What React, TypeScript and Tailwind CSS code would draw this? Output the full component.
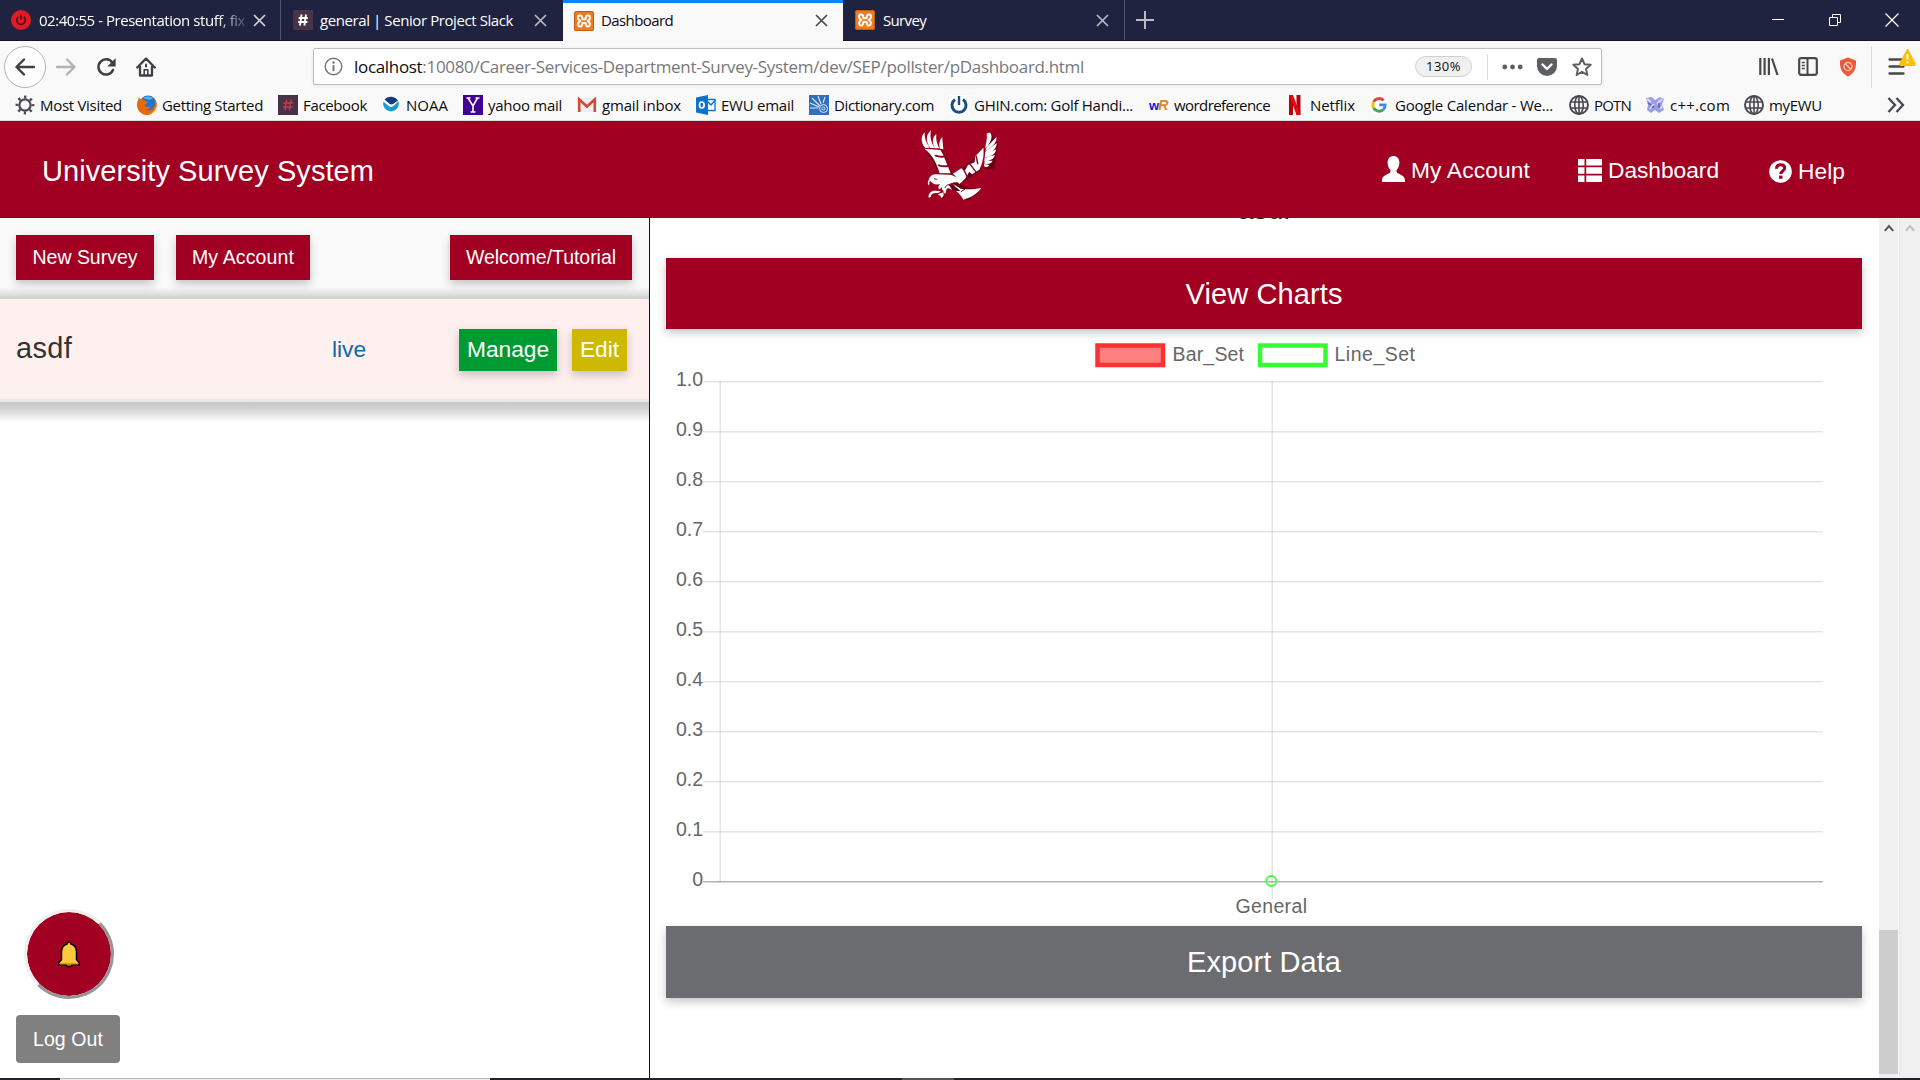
import React, { useLayoutEffect, useRef, useState } from "react";

const CHROME = "font-['Open_Sans',sans-serif]";

/* Single-line label whose tracking is adjusted to occupy a given width. */
function Label({ text, w, className = "" }: { text: React.ReactNode; w: number; className?: string }) {
  const ref = useRef<HTMLSpanElement>(null);
  const [ls, setLs] = useState(0);
  useLayoutEffect(() => {
    const el = ref.current;
    if (!el) return;
    const n = (el.textContent || "").length;
    setLs((w - el.getBoundingClientRect().width) / n);
  }, [w]);
  return (
    <span className={`block shrink-0 whitespace-nowrap ${className}`} style={{ width: w }}>
      <span ref={ref} className="inline-block" style={{ letterSpacing: ls }}>
        {text}
      </span>
    </span>
  );
}

function Xampp() {
  return (
    <svg className="size-5 shrink-0" viewBox="0 0 20 20">
      <rect width="20" height="20" rx="2.5" fill="#f07c1e" />
      <rect x="0.5" y="0.5" width="19" height="19" rx="2" fill="none" stroke="#c05a10" />
      <path
        d="M4.500 4.700Q8.800 3.600 8.300 8.300H11.700Q11.200 3.600 15.500 4.700Q17 8.300 13.800 10Q17 12 15.200 15.200Q11.700 16.700 11.700 12H8.300Q8.300 16.700 4.800 15.200Q3 12 6.200 10Q3 8.300 4.500 4.700Z"
        fill="none"
        stroke="#fff"
        strokeWidth="2"
        strokeLinejoin="round"
      />
    </svg>
  );
}

function SlackIcon({ color, bold }: { color: string; bold?: boolean }) {
  return (
    <svg className="size-5 shrink-0" viewBox="0 0 20 20">
      <rect width="20" height="20" fill="#4b3347" />
      <path d="M8.600 4.500 7 15.500M13 4.500l-1.600 11M5.600 8h9.200M5.200 12h9.200" stroke={color} strokeWidth={bold ? 1.9 : 1.3} fill="none" />
    </svg>
  );
}

function Close({ color }: { color: string }) {
  return (
    <svg className="size-[13px] shrink-0" viewBox="0 0 13 13">
      <path d="M1 1l11 11M12 1 1 12" stroke={color} strokeWidth="1.7" fill="none" />
    </svg>
  );
}

function TabBar() {
  return (
    <div className="flex h-[41px] shrink-0 border-b border-[#12132b] bg-[#202340] text-[15px] text-white">
      <div className="flex w-[281px] items-center border-r border-[#53566c] pl-[11px]">
        <svg className="size-5 shrink-0" viewBox="0 0 20 20">
          <circle cx="10" cy="10" r="10" fill="#e01b22" />
          <path d="M7.300 6.800a4.300 4.300 0 1 0 5.400 0M10 4.800v5" stroke="#4a0d1c" strokeWidth="1.500" fill="none" />
        </svg>
        <Label
          w={206}
          className="ml-2 [mask-image:linear-gradient(to_right,#000_86%,transparent_103%)]"
          text="02:40:55 - Presentation stuff, fix"
        />
        <span className="ml-2">
          <Close color="#d2d3d9" />
        </span>
      </div>
      <div className="flex w-[282px] items-center pl-3">
        <SlackIcon color="#fff" bold />
        <Label w={193} className="ml-[7px]" text="general | Senior Project Slack" />
        <span className="ml-[21px]">
          <Close color="#b9bac4" />
        </span>
      </div>
      <div className="-mb-px flex w-[280px] items-center border-t-[3px] border-[#0a84ff] bg-[#f9f9fa] pb-[3px] pl-[11px] text-[#0c0c0d]">
        <Xampp />
        <Label w={72} className="ml-[7px]" text="Dashboard" />
        <span className="ml-[142px]">
          <Close color="#4a4a4f" />
        </span>
      </div>
      <div className="flex w-[282px] items-center border-r border-[#53566c] pl-3">
        <Xampp />
        <Label w={43} className="ml-2" text="Survey" />
        <span className="ml-[170px]">
          <Close color="#b9bac4" />
        </span>
      </div>
      <svg className="mt-[11px] ml-[11px] size-[18px]" viewBox="0 0 18 18">
        <path d="M9 0v18M0 9h18" stroke="#b9bac4" strokeWidth="2" />
      </svg>
      <div className="ml-auto flex gap-[43px] pt-[13px] pr-[21px]">
        <svg className="size-[14px]" viewBox="0 0 14 14">
          <path d="M1 6.500h12" stroke="#fff" />
        </svg>
        <svg className="size-[14px]" viewBox="0 0 14 14" fill="none" stroke="#fff">
          <path d="M1.500 4.500h8v8h-8zM4.500 4.500v-3h8v8h-3" />
        </svg>
        <svg className="size-[14px]" viewBox="0 0 14 14">
          <path d="M.5.500l13 13M13.500.500l-13 13" stroke="#fff" strokeWidth="1.200" />
        </svg>
      </div>
    </div>
  );
}

function NavBar() {
  return (
    <div className="flex h-[51px] shrink-0 items-center bg-[#f9f9fa]">
      <div className="ml-1 flex size-[42px] shrink-0 items-center justify-center rounded-full border border-[#b5b5b8] bg-[#fdfdfd]">
        <svg className="size-5" viewBox="0 0 20 20" fill="none" stroke="#3f3f43" strokeWidth="2.400" strokeLinecap="round" strokeLinejoin="round">
          <path d="M19 10H1.500M9 2.500 1.500 10 9 17.500" />
        </svg>
      </div>
      <svg className="ml-[10px] size-5 shrink-0" viewBox="0 0 20 20" fill="none" stroke="#b3b3b6" strokeWidth="2.400" strokeLinecap="round" strokeLinejoin="round">
        <path d="M1 10h17.500M11 2.500l7.500 7.500-7.500 7.500" />
      </svg>
      <svg className="ml-[20px] size-5 shrink-0" viewBox="0 0 20 20">
        <path d="M16.300 5.600A7.600 7.600 0 1 0 17 13" stroke="#3f3f43" strokeWidth="2.500" fill="none" strokeLinecap="round" />
        <path d="M19.600 1.200v8.300h-8.300z" fill="#3f3f43" />
      </svg>
      <svg className="ml-[20px] size-5 shrink-0" viewBox="0 0 20 20" fill="none" stroke="#3f3f43" strokeWidth="2.300" strokeLinejoin="round" strokeLinecap="round">
        <path d="M1.200 10.500 10 1.500l8.800 9M4 9v9.500h12V9" />
        <path d="M8.200 18v-5.200h3.600V18" strokeWidth="1.600" />
        <path d="M10 7.500v2" strokeWidth="2" />
      </svg>
      <div className="ml-[157px] flex h-[37px] w-[1289px] shrink-0 items-center rounded-[2px] border border-[#bdbdbe] bg-white shadow-[0_1px_4px_rgba(0,0,0,0.07)]">
        <svg className="ml-[10px] size-[19px] shrink-0" viewBox="0 0 19 19">
          <circle cx="9.500" cy="9.500" r="8.300" stroke="#737373" strokeWidth="1.400" fill="none" />
          <path d="M9.500 8.200v6" stroke="#737373" strokeWidth="2" />
          <circle cx="9.500" cy="5.500" r="1.200" fill="#737373" />
        </svg>
        <Label
          w={730}
          className="ml-[11px] text-[17px] text-[#77777a]"
          text={
            <>
              <span className="text-[#0c0c0d]">localhost</span>:10080/Career-Services-Department-Survey-System/dev/SEP/pollster/pDashboard.html
            </>
          }
        />
        <div className="ml-[331px] flex h-[21px] w-[57px] items-center justify-center rounded-full border border-[#cfcfd1] bg-[#f0f0f1] text-[13px] text-[#0c0c0d]">
          <Label w={35} text="130%" />
        </div>
        <div className="ml-[15px] h-[26px] w-px bg-[#dcdcde]" />
        <svg className="ml-[14px] h-[6px] w-[21px]" viewBox="0 0 21 6" fill="#5f5f63">
          <circle cx="2.800" cy="3" r="2.400" />
          <circle cx="10.500" cy="3" r="2.400" />
          <circle cx="18.200" cy="3" r="2.400" />
        </svg>
        <svg className="ml-[14px] size-5" viewBox="0 0 20 20">
          <path d="M2 1h16a2 2 0 0 1 2 2v6a10 10 0 0 1-20 0V3a2 2 0 0 1 2-2z" fill="#5f5f63" />
          <path d="M5.500 7.500 10 12l4.500-4.500" stroke="#fff" strokeWidth="2.400" fill="none" strokeLinecap="round" strokeLinejoin="round" />
        </svg>
        <svg className="ml-[15px] size-5" viewBox="0 0 20 20">
          <path d="M10 1.500l2.500 5.700 6.200.6-4.700 4.100 1.400 6.100L10 14.800 4.600 18 6 11.900 1.300 7.800l6.200-.6z" stroke="#5f5f63" strokeWidth="2" fill="none" strokeLinejoin="round" />
        </svg>
      </div>
      <svg className="ml-[157px] h-[19px] w-5 shrink-0" viewBox="0 0 20 19" stroke="#48484c" strokeWidth="2.200" fill="none">
        <path d="M1.300 1v17M5.600 1v17M9.900 1v17M13 1.500l5.500 16.500" />
      </svg>
      <svg className="ml-[19px] h-[19px] w-5 shrink-0" viewBox="0 0 20 19" stroke="#48484c" fill="none">
        <rect x="1.200" y="1.200" width="17.600" height="16.600" rx="2" strokeWidth="2.200" />
        <path d="M9.500 1v17" strokeWidth="2" />
        <path d="M3.800 5.500h3M3.800 8.500h3M3.800 11.500h3" strokeWidth="1.300" />
      </svg>
      <svg className="ml-[21px] h-[20px] w-[18px] shrink-0" viewBox="0 0 18 20">
        <path d="M9 .5l8 3c.5 8-2 13-8 16C3 16.500.5 11.500 1 3.500z" fill="#ea5a3c" />
        <circle cx="9" cy="9.500" r="4" stroke="#f8c5b8" strokeWidth="1.300" fill="none" />
        <path d="M6.300 6.800l5.400 5.400" stroke="#f8c5b8" strokeWidth="1.300" />
      </svg>
      <div className="ml-[14px] h-[42px] w-px shrink-0 bg-[#dddddf]" />
      <svg className="-mt-[12px] ml-[16px] h-[34px] w-7 shrink-0" viewBox="0 0 28 34">
        <path d="M1.500 15.500h14M1.500 22.500h14M1.500 29.500h14" stroke="#48484c" strokeWidth="2.300" strokeLinecap="round" />
        <path d="M19.500 5 27.300 19.500a1.300 1.300 0 0 1-1.200 2H13a1.300 1.300 0 0 1-1.200-2z" fill="#ffbf00" stroke="#ffbf00" strokeLinejoin="round" />
        <path d="M19.500 10v5.500M19.500 17.300v2" stroke="#fff" strokeWidth="2" />
      </svg>
    </div>
  );
}

const Globe = () => (
  <svg className="size-5" viewBox="0 0 20 20" stroke="#48484c" fill="none" strokeWidth="1.600">
    <circle cx="10" cy="10" r="9" strokeWidth="1.900" />
    <ellipse cx="10" cy="10" rx="4.200" ry="9" />
    <path d="M10 1v18M1.500 7h17M1.500 13h17" />
  </svg>
);

const bookmarks: { icon: React.ReactNode; slot: string; label: string; w: number }[] = [
  {
    slot: "ml-[15px] w-[25px]",
    label: "Most Visited",
    w: 82,
    icon: (
      <svg className="size-5" viewBox="0 0 20 20" fill="none" stroke="#48484c">
        <circle cx="10" cy="10" r="5.600" strokeWidth="2.200" />
        <circle cx="10" cy="10" r="8" strokeWidth="2.800" strokeDasharray="2.300 3.983" strokeDashoffset="1.150" />
      </svg>
    ),
  },
  {
    slot: "ml-[15px] w-[25px]",
    label: "Getting Started",
    w: 101,
    icon: (
      <svg className="size-5" viewBox="0 0 20 20">
        <circle cx="11" cy="9" r="8.500" fill="#2473c4" />
        <path d="M6 3c3-2 7-2 10 0-2 1-3 2-4 2z" fill="#4db3ea" />
        <path d="M1.500 3.500C1 1.800 3 3 4 4.300 6 4 8 5 8 6l3 1c-1 2-3 2-3 3.500 1 2 4 2 6 .500-1 3-4 4-6 3 3 2.500 8 1.500 9.500-3.500 1-3 .500-5-.500-7C20 6 20.500 10 19 14c-2 4-6 6-9.500 6C4 19.500 0 15 0 10c0-2.500.800-4.500 1.500-6.500z" fill="#e66a0c" />
        <path d="M12 18.800c4-.800 6.500-4 7.300-8.300.500 4-2 8-7.300 8.300z" fill="#fbd33c" />
      </svg>
    ),
  },
  { slot: "ml-[15px] w-[25px]", label: "Facebook", w: 64, icon: <SlackIcon color="#d0384a" /> },
  {
    slot: "ml-[14px] w-[25px]",
    label: "NOAA",
    w: 42,
    icon: (
      <svg className="size-5" viewBox="0 0 20 20">
        <path d="M3.500 4.500A8.300 8.300 0 0 1 17 6l-6 5z" fill="#123a7c" />
        <path d="M2.500 6.500C5 9 8 11.500 10 12c3-1 5-3.500 7.500-5.500A7.800 7.800 0 1 1 2.500 6.500z" fill="#1c9ad6" />
        <path d="M3 5.500l4.500 5L10 12l2.500-1.500L17 5.500l-5 3.500-2 .500-2-.500z" fill="#fff" />
      </svg>
    ),
  },
  {
    slot: "ml-[15px] w-[25px]",
    label: "yahoo mail",
    w: 74,
    icon: (
      <svg className="size-5" viewBox="0 0 20 20">
        <rect width="20" height="20" fill="#410093" />
        <path d="M5 3l5 8 4.500-8M10 11v6M3.500 3h4M12.500 3h4M7.500 17h5" stroke="#fff" strokeWidth="1.600" fill="none" />
      </svg>
    ),
  },
  {
    slot: "ml-[15px] w-[25px]",
    label: "gmail inbox",
    w: 79,
    icon: (
      <svg className="size-5" viewBox="0 0 20 20">
        <rect x="1" y="3" width="18" height="14" fill="#eceff1" />
        <path d="M2.200 17V4.500l7.800 7 7.800-7V17" stroke="#d44638" strokeWidth="2.600" fill="none" />
      </svg>
    ),
  },
  {
    slot: "ml-[15px] w-[25px]",
    label: "EWU email",
    w: 73,
    icon: (
      <svg className="size-5" viewBox="0 0 20 20">
        <path d="M11 4.500h8v11h-8z" fill="#fff" stroke="#1072c6" strokeWidth="1.300" />
        <path d="M11 6l4 4 4.500-5" stroke="#1072c6" strokeWidth="1.500" fill="none" />
        <path d="M0 2.500 12 0v20L0 17.500z" fill="#1072c6" />
        <ellipse cx="5.800" cy="10" rx="2.300" ry="3" stroke="#fff" strokeWidth="1.700" fill="none" />
      </svg>
    ),
  },
  {
    slot: "ml-[15px] w-[25px]",
    label: "Dictionary.com",
    w: 100,
    icon: (
      <svg className="size-5" viewBox="0 0 20 20">
        <rect width="20" height="20" fill="#2f6fc0" />
        <path d="M1 8l9 4M3 3l8 8M9 1l3 8M16 2l-2 6M1 13h8" stroke="#dcebff" strokeWidth="1.100" />
        <circle cx="14.500" cy="13.500" r="4" stroke="#dcebff" fill="none" />
        <circle cx="14.500" cy="13.500" r="1.500" stroke="#dcebff" fill="none" />
      </svg>
    ),
  },
  {
    slot: "ml-[15px] w-[25px]",
    label: "GHIN.com: Golf Handi...",
    w: 159,
    icon: (
      <svg className="size-5" viewBox="0 0 20 20">
        <rect width="20" height="20" fill="#fff" />
        <path d="M6 4.500a7 7 0 1 0 8 0" stroke="#1d4f80" strokeWidth="3" fill="none" />
        <path d="M10 1v9" stroke="#1d4f80" strokeWidth="2.400" />
      </svg>
    ),
  },
  {
    slot: "ml-[16px] w-[25px]",
    label: "wordreference",
    w: 96,
    icon: (
      <span className="flex w-5 items-baseline font-['Liberation_Sans',sans-serif] font-bold text-[#1414cc]">
        <span className="text-[13px] leading-5">w</span>
        <span className="-ml-px text-[14px] leading-5 text-[#dd8a1e] italic">R</span>
      </span>
    ),
  },
  {
    slot: "ml-[15px] w-[25px]",
    label: "Netflix",
    w: 45,
    icon: (
      <svg className="size-5" viewBox="0 0 20 20">
        <path d="M4 0h4v20H4zM11.500 0h4v20h-4z" fill="#b1060f" />
        <path d="M4 0h4l7.500 20h-4z" fill="#e50914" />
      </svg>
    ),
  },
  {
    slot: "ml-[14px] w-[26px]",
    label: "Google Calendar - We...",
    w: 158,
    icon: (
      <svg className="size-5" viewBox="0 0 20 20" fill="none" strokeWidth="2.800">
        <circle cx="10" cy="10" r="10" fill="#fff" />
        <path d="M14.600 5.400A6.200 6.200 0 0 0 4.600 7" stroke="#ea4335" />
        <path d="M4.600 7a6.200 6.200 0 0 0 0 6" stroke="#fbbc05" />
        <path d="M4.600 13a6.200 6.200 0 0 0 9.600 1.600" stroke="#34a853" />
        <path d="M14.200 14.600a6.200 6.200 0 0 0 2-4.800H10.200" stroke="#4285f4" />
      </svg>
    ),
  },
  { slot: "ml-[16px] w-[25px]", label: "POTN", w: 37, icon: <Globe /> },
  {
    slot: "ml-[14px] w-[25px]",
    label: "c++.com",
    w: 60,
    icon: (
      <svg className="size-5" viewBox="0 0 20 20">
        <path d="M1 3l6-1 3 3 5-3 4 2-2 5 2 6-5 3-4-3-4 3-4-3 1-5z" fill="#9c9ce6" />
        <path d="M2 4l4 3M12 9l5-5M5 14l4-5M15 14l3-4" stroke="#dcdcfa" strokeWidth="1.800" />
        <path d="M7 13l2-2M14 8v5M3 8l3 2" stroke="#5c5cc0" strokeWidth="1.500" />
      </svg>
    ),
  },
  { slot: "ml-[14px] w-[25px]", label: "myEWU", w: 53, icon: <Globe /> },
];

function BookmarkBar() {
  return (
    <div className="flex h-[29px] shrink-0 items-center border-b border-[#dedee0] bg-[#f9f9fa] pb-[2px] text-[15px] text-[#0c0c0d]">
      {bookmarks.map((b) => (
        <div key={b.label} className="flex shrink-0 items-center">
          <span className={`block shrink-0 ${b.slot}`}>{b.icon}</span>
          <Label w={b.w} text={b.label} />
        </div>
      ))}
      <svg className="mr-[15px] ml-auto h-4 w-[18px] shrink-0" viewBox="0 0 18 16" fill="none" stroke="#48484c" strokeWidth="2.300">
        <path d="M1.500 1l6.500 7-6.500 7M9.500 1l6.500 7-6.500 7" />
      </svg>
    </div>
  );
}

function EagleLogo() {
  return (
    <svg className="h-20 w-[90px] shrink-0" viewBox="0 0 270 240">
      <g transform="translate(4 5)" fill="#4d0010" opacity="0.7">
        <path d="M30 72 78 74l32 70-36 4zM116 142l90-74-14 64-50 34zM44 156l30-6 50 18 64 28-34 26-36-30-50-10z" />
        <path d="M210 66l20-42 14 30-10 74-26-2z" />
      </g>
      <g fill="#fff">
        <path d="M31 69C18 56 16 34 29 22c-1 18 5 32 15 46zM46 69C32 52 32 28 48 16c-4 20 0 36 11 53zM60 70C50 54 52 36 64 27c-2 16 2 30 9 43zM75 71c-4-12-2-26 7-34 0 12 2 22 3 36z" />
        <path d="M28 71l48 4 9 15 22 55H74C66 118 54 90 28 71z" />
        <path d="M114 146l25-16 10 8 10-18 20-8 2-18 24-26c3 24-2 46-12 66l-22 14-8-8-13 22-18 16c-2-14-8-24-18-32z" />
        <path d="M215 27c3-5 10-5 13 0 4 10 0 22-8 32-3 5-6 8-9 12 0-14 7-28 4-44zM244 36c2 14-6 26-33 43 2-12 8-18 14-23zM245 54c0 16-10 27-35 36l1-10zM244 73c-2 13-13 22-35 25l1-8zM240 90c-4 12-14 18-32 18l1-9zM233 107c-4 8-12 12-25 9l1-8zM223 120c-3 6-9 8-16 4l1-7z" />
        <path d="M42 163c3-11 12-15 22-15l40 1c14 2 27 11 36 25-20-5-34-1-44 10l-8 14c-8-2-9-8-5-14l-8 9c-7-3-6-9 0-17-12 6-22 0-28-7l-5 1c2 4 2 8-1 11-4-5-3-10 1-18z" />
        <path d="M41 218c-2-13 7-21 20-21l16 1c-5 7-10 6-17 6-8 1-13 5-12 11zM69 210c4-6 11-8 16-6 3 6 0 11-7 15 0-6-3-8-9-9z" />
        <path d="M112 175c12 8 18 12 24 16 20 3 40 3 63-2-12 16-26 27-54 35-5-10-12-19-22-26l13 0c-8-8-18-13-24-23z" />
        <path d="M86 205c-2-16 4-26 13-26 6 3 9 9 12 16-6-3-9-6-13-5-4 1-5 8-6 15z" />
      </g>
      <g fill="none" stroke="#8a0a22" strokeLinecap="round">
        <path d="M62 92c14 6 24 2 34 2M72 121c12 6 24 2 34 1" strokeWidth="6" />
        <path d="M143 128l17 34M161 112l21 28M184 94l4 22" strokeWidth="4.500" />
        <path d="M58 161l7 2M90 188c4-9 14-13 30-8M150 192l-12 8" strokeWidth="3" />
      </g>
    </svg>
  );
}

function SiteHeader() {
  return (
    <header className="grid h-[97px] shrink-0 grid-cols-[1fr_90px_1fr] bg-[#a10022] text-white">
      <Label w={332} className="mt-[32px] ml-[42px] text-[29px] leading-[36px]" text="University Survey System" />
      <div className="mt-1">
        <EagleLogo />
      </div>
      <nav className="flex items-start pt-[34px] text-[22.750px] leading-[30px]">
        <svg className="mt-[1px] ml-[377px] h-[26px] w-[23px] shrink-0" viewBox="0 0 23 26" fill="#fff">
          <path d="M11.500 0C8 0 5.600 2.600 5.600 6.500c0 3.200 1.200 6 2.900 7.600 0 1.700-.1 2.500-1 3C5.500 18.500 0 20 0 24v2h23v-2c0-4-5.500-5.500-7.500-6.900-.9-.5-1-1.300-1-3 1.700-1.600 2.900-4.400 2.900-7.600C17.400 2.600 15 0 11.500 0z" />
        </svg>
        <Label w={119} className="ml-[6px]" text="My Account" />
        <svg className="mt-[4px] ml-[48px] h-[23px] w-6 shrink-0" viewBox="0 0 24 23" fill="#fff">
          <path d="M0 0h6.500v6.500H0zM8.200 0H24v6.500H8.200zM0 8.200h6.500v6.500H0zM8.200 8.200H24v6.500H8.200zM0 16.500h6.500V23H0zM8.200 16.500H24V23H8.200z" />
        </svg>
        <Label w={111} className="ml-[6px]" text="Dashboard" />
        <svg className="mt-[5px] ml-[50px] size-[23px] shrink-0" viewBox="0 0 23 23">
          <circle cx="11.500" cy="11.500" r="11.300" fill="#fff" />
          <path d="M7.500 8.700c0-2.500 1.700-4 4.200-4 2.300 0 4 1.300 4 3.300 0 3-3.900 3-3.900 6" stroke="#a10022" strokeWidth="3" fill="none" />
          <path d="M11.800 15.600v3.200" stroke="#a10022" strokeWidth="3.400" />
        </svg>
        <Label w={47} className="mt-px ml-[6px]" text="Help" />
      </nav>
    </header>
  );
}

const SHADOW = "shadow-[0_4px_9px_rgba(0,0,0,0.22)]";

function Sidebar() {
  return (
    <aside className="flex h-full w-[650px] shrink-0 flex-col border-r border-[#111] bg-white">
      <div className="flex h-[81px] shrink-0 bg-[#fafafa] pt-[17px] pl-4 text-[19.500px] text-white">
        <button className={`flex h-[45px] w-[138px] items-center justify-center bg-[#a10022] ${SHADOW}`}>
          <Label w={105} text="New Survey" />
        </button>
        <button className={`ml-[22px] flex h-[45px] w-[134px] items-center justify-center bg-[#a10022] ${SHADOW}`}>
          <Label w={102} text="My Account" />
        </button>
        <button className={`ml-[140px] flex h-[45px] w-[182px] items-center justify-center bg-[#a10022] ${SHADOW}`}>
          <Label w={150} text="Welcome/Tutorial" />
        </button>
      </div>
      <div className="-mt-3 h-3 shrink-0 bg-linear-to-b from-transparent to-black/18" />
      <div className="flex h-[103px] shrink-0 items-start border-b-[3px] border-[#e8e8e8] bg-[#fff0f0] pl-4">
        <Label w={56} className="mt-[29px] text-[29px] leading-[40px] text-[#333]" text="asdf" />
        <Label w={34} className="mt-[33px] ml-[260px] text-[22.750px] leading-[34px] text-[#0b6ba5]" text="live" />
        <button className={`mt-[30px] ml-[93px] flex h-[42px] w-[98px] shrink-0 items-center justify-center bg-[#009a33] pb-px text-[22.750px] text-white ${SHADOW}`}>
          <Label w={82} text="Manage" />
        </button>
        <button className={`mt-[30px] ml-[15px] flex h-[42px] w-[55px] shrink-0 items-center justify-center bg-[#cdb900] pb-px text-[22.750px] text-white ${SHADOW}`}>
          <Label w={39} text="Edit" />
        </button>
      </div>
      <div className="h-5 shrink-0 bg-linear-to-b from-[#c8c8c8] via-[#d3d3d3] via-35% to-white" />
      <div className="mt-auto mb-[15px] ml-4">
        <button className="mb-[16px] ml-[8px] flex size-[90px] items-center justify-center rounded-full border-[3px] border-[#efefef] border-r-[#969696] border-b-[#969696] bg-[#a10022] bg-clip-padding">
          <svg className="h-[27px] w-6" viewBox="0 0 24 27">
            <path d="M12 1.200c1.200 0 1.900.7 1.900 1.700 3.800 1 5.600 4 5.600 8v7.600l2.700 3.300v2h-7.300c-.4 1.400-1.400 2-2.900 2s-2.500-.6-2.900-2H1.800v-2l2.700-3.300v-7.600c0-4 1.800-7 5.600-8 0-1 .7-1.700 1.900-1.700z" fill="#ffc83d" stroke="#000" strokeWidth="1.500" />
            <path d="M3 22.700h18" stroke="#e8970c" strokeWidth="1.600" />
            <path d="M10.200 24.300h3.600" stroke="#8a5a14" strokeWidth="1.500" />
          </svg>
        </button>
        <button className="flex h-12 w-[104px] items-center justify-center rounded bg-[#808080] pt-[2px] text-[19.500px] text-white">
          <Label w={70} text="Log Out" />
        </button>
      </div>
    </aside>
  );
}

const ticks = ["1.0", "0.9", "0.8", "0.7", "0.6", "0.5", "0.4", "0.3", "0.2", "0.1", "0"];

function Chart() {
  return (
    <svg className="block h-[597px] w-[1196px] shrink-0 font-['Liberation_Sans',Arial,sans-serif]" viewBox="666 329 1196 597" fontSize="19.500" fill="#666">
      <rect x="1097.500" y="345.500" width="65.500" height="19.500" fill="#ff8080" stroke="#ff3030" strokeWidth="4.500" />
      <text x="1172.500" y="361" textLength="71.500">Bar_Set</text>
      <rect x="1260" y="345.500" width="65.500" height="19.500" fill="#fff" stroke="#33ff33" strokeWidth="4.500" />
      <text x="1334.500" y="361" textLength="80.500">Line_Set</text>
      {ticks.map((t, i) => (
        <g key={t}>
          <rect x="703" y={381 + i * 50} width="1120" height="1.500" fill={i === 10 ? "#b3b3b3" : "#e5e5e5"} />
          <text x="703" y={386 + i * 50} textAnchor="end">
            {t}
          </text>
        </g>
      ))}
      <rect x="719.500" y="381" width="1.500" height="501" fill="#000" opacity="0.100" />
      <rect x="1271.500" y="381" width="1.500" height="518" fill="#000" opacity="0.100" />
      <circle cx="1271.300" cy="881" r="5" fill="none" stroke="#44fb44" strokeWidth="1.800" />
      <text x="1235.500" y="913" textLength="71.500">General</text>
    </svg>
  );
}

function ScrollTrack({ thumb, color }: { thumb?: boolean; color: string }) {
  return (
    <div className="flex h-full shrink-0 flex-col items-center bg-[#f0f0f0]">
      <svg className="mt-[6px] h-[8px] w-[10px]" viewBox="0 0 10 8" fill="none" stroke={color} strokeWidth="2">
        <path d="M.8 6.800 5 2l4.200 4.800" />
      </svg>
      {thumb && <div className="mt-auto mb-1 h-[144px] w-[19px] bg-[#cdcdcd]" />}
    </div>
  );
}

function ChartPanel() {
  return (
    <main className="flex h-full w-[1229px] shrink-0 flex-col overflow-hidden bg-white pl-4">
      <div className="flex h-[40px] w-[1196px] shrink-0 justify-center">
        <div className="h-[2px] overflow-hidden">
          <Label w={53} className="-mt-[27px] text-[29px] leading-[36px] text-[#222]" text="asdf" />
        </div>
      </div>
      <button className={`relative flex h-[71px] w-[1196px] shrink-0 items-center justify-center bg-[#a10022] pt-[3px] text-[29px] text-white ${SHADOW}`}>
        <Label w={157} text="View Charts" />
      </button>
      <Chart />
      <button className={`flex h-[72px] w-[1196px] shrink-0 items-center justify-center bg-[#6b6c70] pt-[2px] text-[29px] text-white ${SHADOW}`}>
        <Label w={154} text="Export Data" />
      </button>
    </main>
  );
}

export default function App() {
  return (
    <div className="flex h-[1080px] w-[1920px] flex-col overflow-hidden bg-white">
      <div className={`flex shrink-0 flex-col ${CHROME}`}>
        <TabBar />
        <NavBar />
        <BookmarkBar />
      </div>
      <div className="flex min-h-0 flex-1 flex-col font-['Liberation_Sans',Arial,sans-serif]">
        <SiteHeader />
        <div className="flex min-h-0 flex-1">
          <Sidebar />
          <ChartPanel />
          <div className="flex w-[20px] flex-col border-r border-white">
            <ScrollTrack thumb color="#55555a" />
          </div>
          <div className="flex w-[21px] flex-col border-l border-[#e4e4e4]">
            <ScrollTrack color="#bfbfbf" />
          </div>
        </div>
      </div>
      <div className="flex h-[2px] shrink-0 bg-[#232227]">
        <div className="ml-[60px] h-full w-[430px] border-t border-[#b8b8b8] bg-[#efefef]" />
        <div className="ml-[412px] h-full w-[52px] bg-[#555]" />
      </div>
    </div>
  );
}
